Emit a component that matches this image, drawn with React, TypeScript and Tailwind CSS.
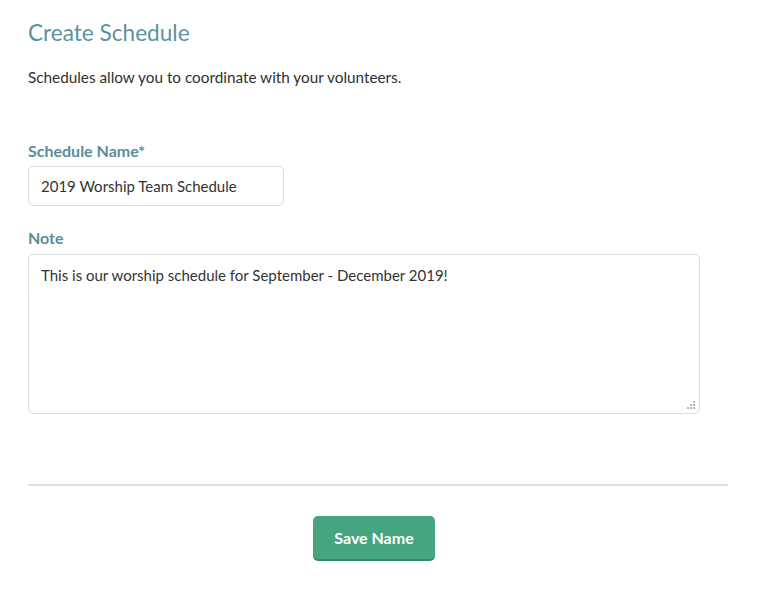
import React from "react";

export default function App() {
  return (
    <div className="min-h-[592px] w-[759px] bg-white px-[28px] pt-[18px] font-['Lato',sans-serif] text-[#333333]">
      <div className="w-[700px]">
        <h1 className="text-[22.6px] leading-[30px] text-[#5b93a0]">Create Schedule</h1>
        <p className="mt-[18px] text-[15.3px] leading-[22px] text-[#2f2f2f]">
          Schedules allow you to coordinate with your volunteers.
        </p>
        <label className="mt-[52px] block text-[16px] font-bold leading-[22px] text-[#5a8d99]">
          Schedule Name*
        </label>
        <input
          readOnly
          value="2019 Worship Team Schedule"
          className="mt-[4px] block h-[40px] w-[256px] rounded-[5px] border border-[#dcdfe0] px-[12px] text-[15px] text-[#333333] outline-none"
        />
        <label className="mt-[21px] block text-[16px] font-bold leading-[22px] text-[#5a8d99]">
          Note
        </label>
        <div className="relative mt-[5px] w-[672px]">
          <textarea
            readOnly
            value="This is our worship schedule for September - December 2019!"
            className="block h-[160px] w-[672px] resize-none rounded-[5px] border border-[#dcdfe0] px-[12px] py-[8px] text-[15px] leading-[24px] text-[#333333] outline-none"
          />
          <svg className="absolute bottom-[4px] right-[4px]" width="9" height="9" viewBox="0 0 9 9">
            <rect x="6" y="0" width="2" height="2" fill="#b5b5b5" />
            <rect x="3" y="3" width="2" height="2" fill="#b5b5b5" />
            <rect x="6" y="3" width="2" height="2" fill="#b5b5b5" />
            <rect x="0" y="6" width="2" height="2" fill="#b5b5b5" />
            <rect x="3" y="6" width="2" height="2" fill="#b5b5b5" />
            <rect x="6" y="6" width="2" height="2" fill="#b5b5b5" />
          </svg>
        </div>
        <div className="mt-[70px] h-[2px] w-[700px] bg-[#dcdfe0]" />
        <div className="mt-[30px] flex justify-center pr-[8px]">
          <button className="h-[45px] w-[122px] rounded-[5px] border-b-2 border-[#3a8a68] bg-[#46a57f] text-[16px] font-bold text-white">
            Save Name
          </button>
        </div>
      </div>
    </div>
  );
}
